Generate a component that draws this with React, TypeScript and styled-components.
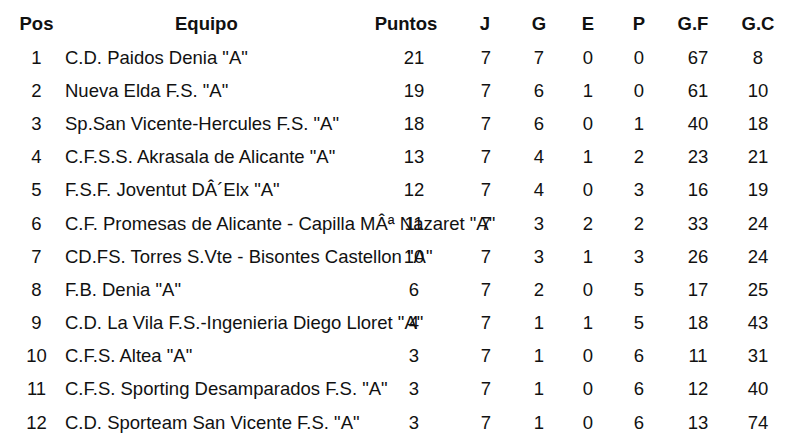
import React from 'react';
import styled, { createGlobalStyle } from 'styled-components';

type Team = {
  pos: number;
  name: string;
  pts: number;
  j: number;
  g: number;
  e: number;
  p: number;
  gf: number;
  gc: number;
};

const teams: Team[] = [
  { pos: 1, name: 'C.D. Paidos Denia "A"', pts: 21, j: 7, g: 7, e: 0, p: 0, gf: 67, gc: 8 },
  { pos: 2, name: 'Nueva Elda F.S. "A"', pts: 19, j: 7, g: 6, e: 1, p: 0, gf: 61, gc: 10 },
  { pos: 3, name: 'Sp.San Vicente-Hercules F.S. "A"', pts: 18, j: 7, g: 6, e: 0, p: 1, gf: 40, gc: 18 },
  { pos: 4, name: 'C.F.S.S. Akrasala de Alicante "A"', pts: 13, j: 7, g: 4, e: 1, p: 2, gf: 23, gc: 21 },
  { pos: 5, name: 'F.S.F. Joventut DÂ´Elx "A"', pts: 12, j: 7, g: 4, e: 0, p: 3, gf: 16, gc: 19 },
  { pos: 6, name: 'C.F. Promesas de Alicante - Capilla MÂª Nazaret "A"', pts: 11, j: 7, g: 3, e: 2, p: 2, gf: 33, gc: 24 },
  { pos: 7, name: 'CD.FS. Torres S.Vte - Bisontes Castellon "A"', pts: 10, j: 7, g: 3, e: 1, p: 3, gf: 26, gc: 24 },
  { pos: 8, name: 'F.B. Denia "A"', pts: 6, j: 7, g: 2, e: 0, p: 5, gf: 17, gc: 25 },
  { pos: 9, name: 'C.D. La Vila F.S.-Ingenieria Diego Lloret "A"', pts: 4, j: 7, g: 1, e: 1, p: 5, gf: 18, gc: 43 },
  { pos: 10, name: 'C.F.S. Altea "A"', pts: 3, j: 7, g: 1, e: 0, p: 6, gf: 11, gc: 31 },
  { pos: 11, name: 'C.F.S. Sporting Desamparados F.S. "A"', pts: 3, j: 7, g: 1, e: 0, p: 6, gf: 12, gc: 40 },
  { pos: 12, name: 'C.D. Sporteam San Vicente F.S. "A"', pts: 3, j: 7, g: 1, e: 0, p: 6, gf: 13, gc: 74 },
];

const GlobalStyle = createGlobalStyle`
  html, body {
    margin: 0;
    padding: 0;
    background: #fff;
  }
  body {
    font-family: "Liberation Sans", Arial, sans-serif;
    color: #111;
  }
`;

const Table = styled.div`
  width: 800px;
  height: 445px;
  padding: 6px 0 0 9px;
  box-sizing: border-box;
  overflow: hidden;
`;

const Row = styled.div<{ $head?: boolean }>`
  display: grid;
  grid-template-columns: 55px 314px 72px 72px 34px 64px 38px 80px 40px;
  height: ${p => (p.$head ? '35px' : '33.2px')};
  align-items: center;
  font-size: 18.5px;
  font-weight: ${p => (p.$head ? 700 : 400)};
`;

// $shift moves a header label left of the column centre, as in the source sheet
const Cell = styled.div<{ $shift?: number }>`
  display: flex;
  justify-content: center;
  white-space: nowrap;
  min-width: 0;
  padding-right: ${p => (p.$shift ? `${p.$shift * 2}px` : '0')};
`;

const NameCell = styled.div<{ $head?: boolean }>`
  white-space: nowrap;
  overflow: visible;
  min-width: 0;
  padding-left: ${p => (p.$head ? '111px' : '1px')};
`;

const App: React.FC = () => {
  return (
    <>
      <GlobalStyle />
      <Table>
        <Row $head>
          <Cell>Pos</Cell>
          <NameCell $head>Equipo</NameCell>
          <Cell $shift={8}>Puntos</Cell>
          <Cell $shift={1}>J</Cell>
          <Cell>G</Cell>
          <Cell>E</Cell>
          <Cell>P</Cell>
          <Cell $shift={5}>G.F</Cell>
          <Cell>G.C</Cell>
        </Row>
        {teams.map(t => (
          <Row key={t.pos}>
            <Cell>{t.pos}</Cell>
            <NameCell>{t.name}</NameCell>
            <Cell>{t.pts}</Cell>
            <Cell>{t.j}</Cell>
            <Cell>{t.g}</Cell>
            <Cell>{t.e}</Cell>
            <Cell>{t.p}</Cell>
            <Cell>{t.gf}</Cell>
            <Cell>{t.gc}</Cell>
          </Row>
        ))}
      </Table>
    </>
  );
};

export default App;
